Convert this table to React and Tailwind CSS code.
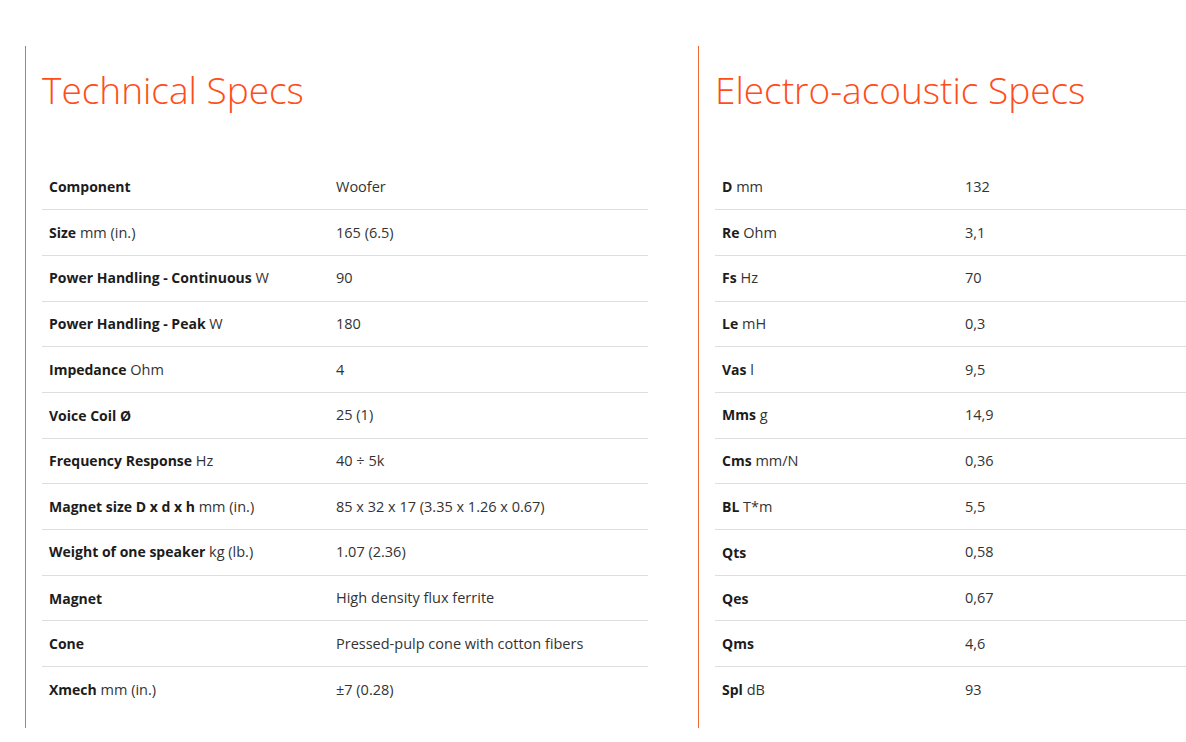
const technical = [
  { label: 'Component', value: 'Woofer' },
  { label: 'Size', unit: 'mm (in.)', value: '165 (6.5)' },
  { label: 'Power Handling - Continuous', unit: 'W', value: '90' },
  { label: 'Power Handling - Peak', unit: 'W', value: '180' },
  { label: 'Impedance', unit: 'Ohm', value: '4' },
  { label: 'Voice Coil Ø', value: '25 (1)' },
  { label: 'Frequency Response', unit: 'Hz', value: '40 ÷ 5k' },
  { label: 'Magnet size D x d x h', unit: 'mm (in.)', value: '85 x 32 x 17 (3.35 x 1.26 x 0.67)' },
  { label: 'Weight of one speaker', unit: 'kg (lb.)', value: '1.07 (2.36)' },
  { label: 'Magnet', value: 'High density flux ferrite' },
  { label: 'Cone', value: 'Pressed-pulp cone with cotton fibers' },
  { label: 'Xmech', unit: 'mm (in.)', value: '±7 (0.28)' },
]

const acoustic = [
  { label: 'D', unit: 'mm', value: '132' },
  { label: 'Re', unit: 'Ohm', value: '3,1' },
  { label: 'Fs', unit: 'Hz', value: '70' },
  { label: 'Le', unit: 'mH', value: '0,3' },
  { label: 'Vas', unit: 'l', value: '9,5' },
  { label: 'Mms', unit: 'g', value: '14,9' },
  { label: 'Cms', unit: 'mm/N', value: '0,36' },
  { label: 'BL', unit: 'T*m', value: '5,5' },
  { label: 'Qts', value: '0,58' },
  { label: 'Qes', value: '0,67' },
  { label: 'Qms', value: '4,6' },
  { label: 'Spl', unit: 'dB', value: '93' },
]

function SpecTable({ rows, labelWidth }) {
  return (
    <table className="w-full border-collapse text-[14px] text-[#1c1c1c]">
      <tbody>
        {rows.map((r) => (
          <tr key={r.label} className="h-[45.7px] border-b border-[#dedede] last:border-0">
            <td className="pl-[7px] pr-2 align-middle" style={{ width: labelWidth }}>
              <span className="font-bold">{r.label}</span>
              {r.unit && <span className="text-[14.5px] font-normal text-[#333]"> {r.unit}</span>}
            </td>
            <td className="pl-[7px] pr-2 align-middle text-[14.5px] text-[#333]">{r.value}</td>
          </tr>
        ))}
      </tbody>
    </table>
  )
}

function SpecColumn({ title, rows, labelWidth, className }) {
  return (
    <section className={`border-l border-[#f06a35] pl-4 ${className}`}>
      <h2 className="pt-[20px] pb-[2px] text-[37px] font-light leading-[48px] text-[#ff4d1a]">{title}</h2>
      <div className="pt-[48px] pb-[16px]">
        <SpecTable rows={rows} labelWidth={labelWidth} />
      </div>
    </section>
  )
}

export default function App() {
  return (
    <div className="min-h-screen overflow-hidden bg-white font-['Open_Sans',sans-serif]">
      <div className="flex pt-[46px] pl-[25px]">
        <SpecColumn title="Technical Specs" rows={technical} labelWidth="287px" className="w-[673px] shrink-0 pr-[50px]" />
        <SpecColumn title="Electro-acoustic Specs" rows={acoustic} labelWidth="243px" className="min-w-0 flex-1" />
      </div>
    </div>
  )
}
